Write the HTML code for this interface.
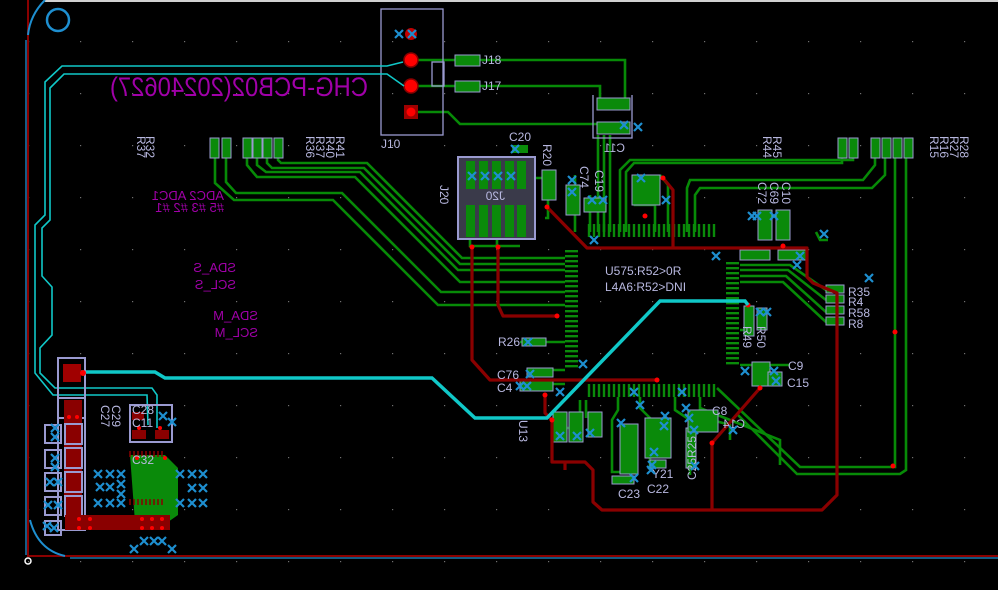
<!DOCTYPE html>
<html><head><meta charset="utf-8"><style>
html,body{margin:0;padding:0;background:#000;overflow:hidden}
svg{display:block}
text{font-family:"Liberation Sans",sans-serif}
.l{fill:#b8b8e0;font-size:12px}
.p{fill:#a000a8;font-size:13px}
</style></head><body>
<svg width="998" height="590" viewBox="0 0 998 590" xmlns="http://www.w3.org/2000/svg">
<defs>
<pattern id="g" x="28" y="41" width="52" height="52" patternUnits="userSpaceOnUse"><rect x="0" y="0" width="1.2" height="1.2" fill="#707070"/></pattern>
<g id="x"><path d="M-4,-4L4,4M4,-4L-4,4" stroke="#1e8fd0" stroke-width="2.2"/></g>
</defs>
<rect width="998" height="590" fill="#000"/>
<rect width="998" height="590" fill="url(#g)"/>
<rect x="45" y="0" width="953" height="2" fill="#d0d0d0"/>
<!-- board outline -->
<path d="M28,0V556H998" stroke="#8a0000" stroke-width="2" fill="none"/>
<path d="M26,40V555M70,558H998" stroke="#1e8fd0" stroke-width="1.3" fill="none"/>
<path d="M45,0Q30,15 28,35" stroke="#1e8fd0" stroke-width="2" fill="none"/>
<path d="M30,520Q38,550 65,556" stroke="#1e8fd0" stroke-width="2" fill="none"/>
<circle cx="58" cy="20" r="11" stroke="#1e8fd0" stroke-width="2.5" fill="none"/>
<circle cx="28" cy="561" r="3" fill="none" stroke="#fff" stroke-width="1.5"/>

<!-- purple silkscreen -->
<text transform="translate(368,96) scale(-1,1)" fill="#a000a8" font-size="27" textLength="258" lengthAdjust="spacingAndGlyphs">CHG-PCB02(20240627)</text>
<text transform="translate(224,200) scale(-1,1)" class="p">ADC2 ADC1</text>
<text transform="translate(224,212) scale(-1,1)" class="p">#5 #3 #2 #1</text>
<text transform="translate(236,272) scale(-1,1)" class="p">SDA_S</text>
<text transform="translate(236,289) scale(-1,1)" class="p">SCL_S</text>
<text transform="translate(258,320) scale(-1,1)" class="p">SDA_M</text>
<text transform="translate(258,337) scale(-1,1)" class="p">SCL_M</text>

<!-- green traces -->
<g stroke="#078a07" stroke-width="2.6" fill="none">
<path d="M215,158V183L234,200H333L438,305H565"/>
<path d="M226,158V182L236,193H342L441,292H565"/>
<path d="M247,158V165L257,177H355L460,282H565"/>
<path d="M257,158V165L266,172H360L458,270H565"/>
<path d="M267,158V163L272,168H364L460,264H565"/>
<path d="M278,158V160L281,163H367L462,258H565"/>
<path d="M418,60H625V98"/>
<path d="M418,86H600V98"/>
<path d="M418,112H448L460,124H600"/>
<path d="M853,158V160H630L620,170V232"/>
<path d="M842,158V163H634L626,172V232"/>
<path d="M875,150V165L863,180H690L687,188V232"/>
<path d="M885,150V175L872,188H700L695,195V232"/>
<path d="M895,150V467H800L717,388"/>
<path d="M906,150V470L900,474H797L738,415"/>
<path d="M740,265H790L826,290"/>
<path d="M740,270H788L826,300"/>
<path d="M740,276H786L826,312"/>
<path d="M740,282H783L826,322"/>
<path d="M598,232V135M604,232V135M610,232V135"/>
<path d="M470,238V246H520M497,238V246"/>
<path d="M530,178H548V185M545,218H548V200"/>
<path d="M575,175V232M590,195V232"/>
<path d="M640,175L635,182V205H655V232M660,175L668,185V232"/>
<path d="M520,342H565"/>
<path d="M540,370H565M540,384H565"/>
<path d="M740,365H790"/>
<path d="M740,330H750"/>
<path d="M618,397V410L612,420V472H630M640,397V408L650,418V470M675,397V410L690,420V475"/>
<path d="M700,397V415L712,425M712,420L730,425V440"/>
<path d="M580,400V420L570,428H560M586,400V418"/>
<path d="M700,408L780,440V465"/>
<path d="M816,232L820,240H828"/>
</g>
<!-- pads green -->
<g fill="#0a8a0a" stroke="#9a9ad0" stroke-width="1">
<rect x="210" y="138" width="9" height="20"/><rect x="222" y="138" width="9" height="20"/>
<rect x="243" y="138" width="9" height="20"/><rect x="253" y="138" width="9" height="20"/><rect x="263" y="138" width="9" height="20"/><rect x="274" y="138" width="9" height="20"/>
<rect x="838" y="138" width="9" height="20"/><rect x="849" y="138" width="9" height="20"/>
<rect x="871" y="138" width="9" height="20"/><rect x="882" y="138" width="9" height="20"/><rect x="893" y="138" width="9" height="20"/><rect x="904" y="138" width="9" height="20"/>
<rect x="455" y="55" width="25" height="11"/><rect x="455" y="81" width="25" height="11"/>
<rect x="826" y="285" width="18" height="8"/><rect x="826" y="295" width="18" height="8"/><rect x="826" y="306" width="18" height="8"/><rect x="826" y="317" width="18" height="8"/>
<rect x="740" y="250" width="30" height="10"/><rect x="778" y="250" width="28" height="10"/>
<rect x="758" y="210" width="14" height="30"/><rect x="776" y="210" width="14" height="30"/>
<rect x="542" y="170" width="14" height="30"/>
<rect x="566" y="185" width="14" height="30"/><rect x="584" y="198" width="22" height="14"/>
<rect x="632" y="175" width="28" height="30"/>
<rect x="597" y="98" width="33" height="12"/><rect x="597" y="122" width="33" height="12"/>
<rect x="522" y="338" width="24" height="8"/><rect x="527" y="368" width="26" height="9"/><rect x="520" y="381" width="33" height="10"/>
<rect x="744" y="306" width="10" height="30"/><rect x="757" y="308" width="10" height="22"/>
<rect x="752" y="362" width="18" height="24"/><rect x="768" y="372" width="14" height="14"/>
<rect x="553" y="412" width="14" height="30"/><rect x="569" y="412" width="14" height="30"/><rect x="588" y="412" width="14" height="25"/>
<rect x="620" y="424" width="18" height="50"/><rect x="645" y="418" width="26" height="40"/>
<rect x="686" y="428" width="10" height="40"/><rect x="688" y="410" width="30" height="22"/>
<rect x="612" y="476" width="22" height="8"/><rect x="650" y="460" width="16" height="8"/>
</g>
<!-- J10 -->
<rect x="381" y="9" width="62" height="126" fill="none" stroke="#9a9ad0" stroke-width="1.3"/>
<rect x="432" y="62" width="12" height="24" fill="none" stroke="#9a9ad0" stroke-width="1.3"/>
<circle cx="411" cy="34" r="6" fill="#c00000"/>
<circle cx="411" cy="60" r="7" fill="#f00" stroke="#800" stroke-width="1.5"/>
<circle cx="411" cy="86" r="7" fill="#f00" stroke="#800" stroke-width="1.5"/>
<rect x="404" y="105" width="14" height="14" fill="#a00000"/><circle cx="411" cy="112" r="4.5" fill="#f00"/>
<text x="381" y="148" class="l">J10</text>
<text x="482" y="64" class="l" font-size="10">J18</text><text x="482" y="90" class="l" font-size="10">J17</text>
<!-- D11 outline -->
<path d="M593,95V138H632V95" fill="none" stroke="#9a9ad0" stroke-width="1.3"/>
<text transform="translate(625,152) scale(-1,1)" class="l">C11</text>
<!-- J20 -->
<rect x="458" y="157" width="77" height="82" fill="#3a3a4a" stroke="#9a9ad0" stroke-width="2"/>
<g fill="#0a8a0a"><rect x="466" y="161" width="9" height="28"/><rect x="479" y="161" width="9" height="28"/><rect x="492" y="161" width="9" height="28"/><rect x="505" y="161" width="9" height="28"/><rect x="517" y="161" width="9" height="28"/>
<rect x="466" y="205" width="9" height="32"/><rect x="479" y="205" width="9" height="32"/><rect x="492" y="205" width="9" height="32"/><rect x="505" y="205" width="9" height="32"/><rect x="517" y="205" width="9" height="32"/></g>
<text transform="translate(505,200) scale(-1,1)" class="l" font-size="11">J20</text>
<text transform="translate(440,185) rotate(90)" class="l">J20</text>
<rect x="512" y="145" width="16" height="8" fill="#0a8a0a"/>
<!-- U1 pins -->
<g fill="#0a8a0a">
<path d="M565,250h13v2.4h-13zM565,255h13v2.4h-13zM565,260h13v2.4h-13zM565,265h13v2.4h-13zM565,270h13v2.4h-13zM565,275h13v2.4h-13zM565,280h13v2.4h-13zM565,285h13v2.4h-13zM565,290h13v2.4h-13zM565,295h13v2.4h-13zM565,300h13v2.4h-13zM565,305h13v2.4h-13zM565,310h13v2.4h-13zM565,315h13v2.4h-13zM565,320h13v2.4h-13zM565,325h13v2.4h-13zM565,330h13v2.4h-13zM565,335h13v2.4h-13zM565,340h13v2.4h-13zM565,345h13v2.4h-13zM565,350h13v2.4h-13zM565,355h13v2.4h-13zM565,360h13v2.4h-13zM565,365h13v2.4h-13z"/>
<path d="M726,262h13v2.4h-13zM726,267h13v2.4h-13zM726,272h13v2.4h-13zM726,277h13v2.4h-13zM726,282h13v2.4h-13zM726,287h13v2.4h-13zM726,292h13v2.4h-13zM726,297h13v2.4h-13zM726,302h13v2.4h-13zM726,307h13v2.4h-13zM726,312h13v2.4h-13zM726,317h13v2.4h-13zM726,322h13v2.4h-13zM726,327h13v2.4h-13zM726,332h13v2.4h-13zM726,337h13v2.4h-13zM726,342h13v2.4h-13zM726,347h13v2.4h-13zM726,352h13v2.4h-13zM726,357h13v2.4h-13zM726,362h13v2.4h-13z"/>
</g>
<g stroke="#0a8a0a" stroke-width="2.4">
<path d="M589,224v13M594,224v13M599,224v13M604,224v13M609,224v13M614,224v13M619,224v13M624,224v13M629,224v13M634,224v13M639,224v13M644,224v13M649,224v13M654,224v13M659,224v13M664,224v13M669,224v13M674,224v13M679,224v13M684,224v13M689,224v13M694,224v13M699,224v13M704,224v13M709,224v13M714,224v13"/>
<path d="M589,384v13M594,384v13M599,384v13M604,384v13M609,384v13M614,384v13M619,384v13M624,384v13M629,384v13M634,384v13M639,384v13M644,384v13M649,384v13M654,384v13M659,384v13M664,384v13M669,384v13M674,384v13M679,384v13M684,384v13M689,384v13M694,384v13M699,384v13M704,384v13M709,384v13M714,384v13"/>
</g>
<text x="605" y="275" class="l" font-size="13">U575:R52&gt;0R</text>
<text x="605" y="291" class="l" font-size="13">L4A6:R52&gt;DNI</text>
<!-- dark red traces -->
<g stroke="#8a0000" stroke-width="3.2" fill="none" stroke-linejoin="round">
<path d="M547,207L587,248H807V277L813,283L837,293V495L822,510H602L593,502V470L585,462H552V420L545,413V393"/>
<path d="M472,247V360L490,380H657"/>
<path d="M498,247V305L503,316H557"/>
<path d="M712,443V510"/>
<path d="M712,443L760,388"/>
<path d="M673,249V190L663,178"/>
<path d="M565,470V462"/>
</g>
<g fill="#f00"><circle cx="472" cy="247" r="2.5"/><circle cx="498" cy="247" r="2.5"/><circle cx="547" cy="207" r="2.5"/><circle cx="557" cy="316" r="2.5"/><circle cx="657" cy="380" r="2.5"/><circle cx="545" cy="395" r="2.5"/><circle cx="552" cy="420" r="2.5"/><circle cx="712" cy="443" r="2.5"/><circle cx="760" cy="388" r="2.5"/><circle cx="783" cy="246" r="2.5"/><circle cx="748" cy="305" r="2.5"/><circle cx="663" cy="178" r="2.5"/><circle cx="645" cy="216" r="2.5"/><circle cx="895" cy="332" r="2.5"/><circle cx="893" cy="466" r="2.5"/></g>
<!-- cyan traces -->
<g stroke="#10c8c8" fill="none">
<path d="M80,372H155L165,378H432L475,418H547L660,301H745L748,305" stroke-width="3.5"/>
<path d="M403,62L387,66H62L45,82V215L35,225V373L53,395H147L148,425" stroke-width="1.6"/>
<path d="M404,86L387,74H64L50,88V220L42,228V276L52,287V335L40,348V373L55,388H152L157,395V428" stroke-width="1.6"/>
</g>
<!-- bottom-left -->
<rect x="58" y="358" width="27" height="60" fill="none" stroke="#9a9ad0" stroke-width="2"/>
<rect x="63" y="364" width="18" height="18" fill="#a00000"/><circle cx="83" cy="373" r="3" fill="#f00"/>
<rect x="58" y="398" width="27" height="132" fill="none" stroke="#9a9ad0" stroke-width="2"/>
<rect x="64" y="400" width="18" height="115" fill="#8a0000"/>
<g fill="none" stroke="#9a9ad0" stroke-width="2"><rect x="65" y="424" width="17" height="20"/><rect x="65" y="448" width="17" height="20"/><rect x="65" y="472" width="17" height="20"/><rect x="65" y="496" width="17" height="20"/>
<rect x="45" y="425" width="16" height="18"/><rect x="45" y="450" width="16" height="18"/><rect x="45" y="473" width="16" height="18"/><rect x="45" y="497" width="16" height="18"/><rect x="45" y="521" width="16" height="14"/>
<rect x="130" y="405" width="42" height="37"/></g>
<path d="M130,455H165L178,468V515L168,522H135Z" fill="#0a8a0a"/>
<rect x="65" y="515" width="105" height="15" fill="#8a0000"/>
<g stroke="#8a0000" stroke-width="1.5"><path d="M130,457v-6M134,457v-6M138,457v-6M142,457v-6M146,457v-6M150,457v-6M154,457v-6M158,457v-6M162,457v-6M130,505v-6M134,505v-6M138,505v-6M142,505v-6M146,505v-6M150,505v-6M154,505v-6M158,505v-6M162,505v-6"/></g>
<rect x="132" y="412" width="12" height="8" fill="#8a0000"/><rect x="132" y="430" width="14" height="9" fill="#8a0000"/><rect x="155" y="430" width="14" height="9" fill="#8a0000"/>
<g fill="#f00"><circle cx="69" cy="417" r="2"/><circle cx="77" cy="417" r="2"/><circle cx="139" cy="428" r="2"/><circle cx="160" cy="428" r="2"/><circle cx="137" cy="458" r="2"/><circle cx="165" cy="458" r="2"/><circle cx="79" cy="519" r="2"/><circle cx="90" cy="519" r="2"/><circle cx="79" cy="528" r="2"/><circle cx="90" cy="528" r="2"/><circle cx="142" cy="519" r="2"/><circle cx="152" cy="519" r="2"/><circle cx="162" cy="519" r="2"/><circle cx="142" cy="528" r="2"/><circle cx="152" cy="528" r="2"/><circle cx="162" cy="528" r="2"/></g>
<text transform="translate(112,405) rotate(90)" class="l" font-size="11">C29</text>
<text transform="translate(101,405) rotate(90)" class="l" font-size="11">C27</text>
<text x="132" y="414" class="l" font-size="10">C28</text><text x="132" y="427" class="l" font-size="10">C11</text><text x="132" y="464" class="l" font-size="10">C32</text>
<!-- labels -->
<text transform="translate(146,136) rotate(90)" class="l" font-size="11">R32</text>
<text transform="translate(137,136) rotate(90)" class="l" font-size="11">R37</text>
<text transform="translate(336,136) rotate(90)" class="l" font-size="11">R41</text>
<text transform="translate(326,136) rotate(90)" class="l" font-size="11">R40</text>
<text transform="translate(316,136) rotate(90)" class="l" font-size="11">R37</text>
<text transform="translate(306,136) rotate(90)" class="l" font-size="11">R36</text>
<text transform="translate(773,136) rotate(90)" class="l" font-size="11">R45</text>
<text transform="translate(763,136) rotate(90)" class="l" font-size="11">R44</text>
<text transform="translate(960,136) rotate(90)" class="l" font-size="11">R28</text>
<text transform="translate(950,136) rotate(90)" class="l" font-size="11">R27</text>
<text transform="translate(940,136) rotate(90)" class="l" font-size="11">R16</text>
<text transform="translate(930,136) rotate(90)" class="l" font-size="11">R15</text>
<text x="509" y="141" class="l">C20</text>
<text transform="translate(543,144) rotate(90)" class="l">R20</text>
<text transform="translate(580,166) rotate(90)" class="l">C74</text>
<text transform="translate(595,170) rotate(90)" class="l">C19</text>
<text transform="translate(758,182) rotate(90)" class="l">C72</text>
<text transform="translate(770,182) rotate(90)" class="l">C69</text>
<text transform="translate(782,182) rotate(90)" class="l">C10</text>
<text x="848" y="296" class="l">R35</text><text x="848" y="306" class="l">R4</text><text x="848" y="317" class="l">R58</text><text x="848" y="328" class="l">R8</text>
<text transform="translate(757,326) rotate(90)" class="l">R50</text>
<text transform="translate(743,326) rotate(90)" class="l">R49</text>
<text x="498" y="346" class="l">R26</text>
<text x="497" y="379" class="l">C76</text><text x="497" y="392" class="l">C4</text>
<text x="788" y="370" class="l">C9</text><text x="787" y="387" class="l">C15</text>
<text x="712" y="415" class="l">C8</text><text transform="translate(745,428) scale(-1,1)" class="l">C14</text>
<text x="618" y="498" class="l">C23</text><text x="647" y="493" class="l">C22</text><text x="652" y="478" class="l">Y21</text>
<text transform="translate(696,480) rotate(-90)" class="l">C25R25</text>
<text transform="translate(519,420) rotate(90)" class="l" font-size="11">U13</text>
<!-- blue X marks -->
<g>
<use href="#x" x="399" y="34"/><use href="#x" x="412" y="34"/>
<use href="#x" x="472" y="176"/><use href="#x" x="485" y="176"/><use href="#x" x="498" y="176"/><use href="#x" x="511" y="176"/>
<use href="#x" x="515" y="149"/><use href="#x" x="572" y="180"/><use href="#x" x="572" y="192"/><use href="#x" x="592" y="200"/><use href="#x" x="603" y="200"/>
<use href="#x" x="641" y="178"/><use href="#x" x="666" y="200"/><use href="#x" x="594" y="240"/>
<use href="#x" x="624" y="125"/><use href="#x" x="638" y="127"/>
<use href="#x" x="752" y="216"/><use href="#x" x="757" y="216"/><use href="#x" x="774" y="216"/><use href="#x" x="824" y="234"/>
<use href="#x" x="716" y="256"/><use href="#x" x="800" y="256"/><use href="#x" x="797" y="265"/><use href="#x" x="869" y="278"/>
<use href="#x" x="760" y="312"/><use href="#x" x="767" y="312"/>
<use href="#x" x="528" y="342"/><use href="#x" x="583" y="364"/><use href="#x" x="530" y="374"/><use href="#x" x="520" y="386"/><use href="#x" x="527" y="386"/>
<use href="#x" x="745" y="371"/><use href="#x" x="774" y="371"/><use href="#x" x="776" y="381"/>
<use href="#x" x="560" y="392"/><use href="#x" x="634" y="392"/><use href="#x" x="682" y="392"/><use href="#x" x="640" y="405"/><use href="#x" x="686" y="408"/><use href="#x" x="689" y="418"/>
<use href="#x" x="560" y="436"/><use href="#x" x="577" y="436"/><use href="#x" x="590" y="433"/>
<use href="#x" x="621" y="423"/><use href="#x" x="665" y="416"/><use href="#x" x="664" y="426"/>
<use href="#x" x="654" y="452"/><use href="#x" x="652" y="465"/><use href="#x" x="695" y="466"/><use href="#x" x="694" y="430"/><use href="#x" x="733" y="430"/>
<use href="#x" x="634" y="478"/><use href="#x" x="651" y="470"/>
<use href="#x" x="55" y="428"/><use href="#x" x="55" y="437"/><use href="#x" x="55" y="458"/><use href="#x" x="55" y="467"/><use href="#x" x="50" y="482"/><use href="#x" x="58" y="482"/>
<use href="#x" x="48" y="505"/><use href="#x" x="58" y="505"/><use href="#x" x="47" y="526"/><use href="#x" x="54" y="528"/>
<use href="#x" x="163" y="416"/><use href="#x" x="172" y="422"/>
<use href="#x" x="98" y="474"/><use href="#x" x="110" y="474"/><use href="#x" x="121" y="474"/><use href="#x" x="100" y="487"/><use href="#x" x="110" y="487"/><use href="#x" x="121" y="484"/><use href="#x" x="98" y="503"/><use href="#x" x="110" y="503"/><use href="#x" x="121" y="503"/><use href="#x" x="121" y="494"/>
<use href="#x" x="180" y="474"/><use href="#x" x="192" y="474"/><use href="#x" x="203" y="474"/><use href="#x" x="192" y="488"/><use href="#x" x="203" y="488"/><use href="#x" x="180" y="503"/><use href="#x" x="192" y="503"/><use href="#x" x="203" y="503"/>
<use href="#x" x="144" y="541"/><use href="#x" x="154" y="541"/><use href="#x" x="162" y="541"/><use href="#x" x="134" y="549"/><use href="#x" x="172" y="549"/>
</g>
</svg>
</body></html>
